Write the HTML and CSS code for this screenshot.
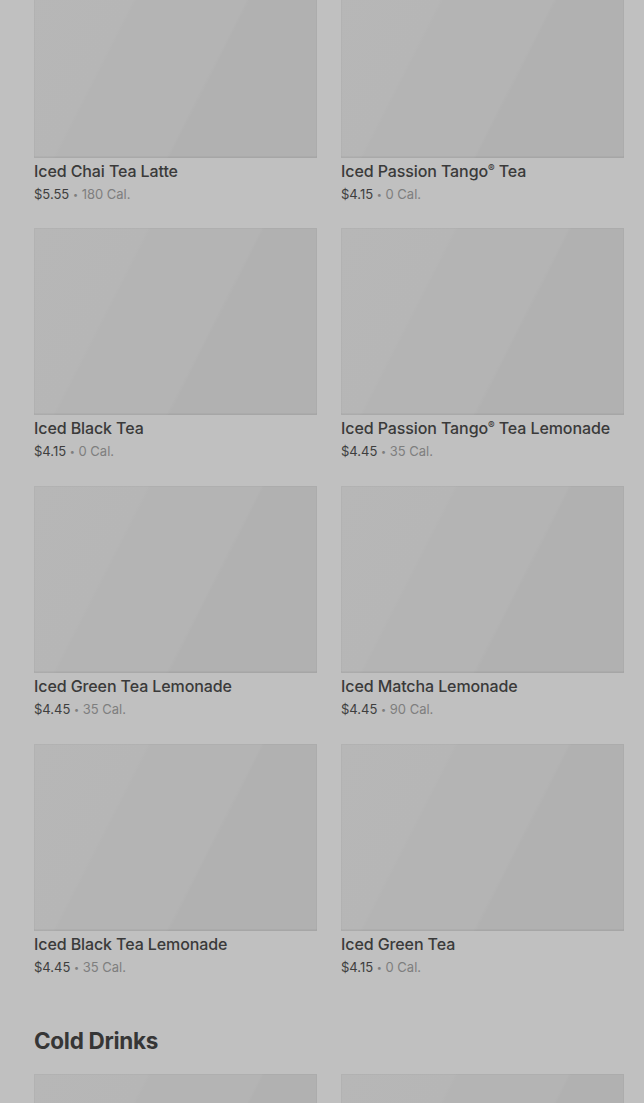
FILE: index.html
```html
<!DOCTYPE html>
<html lang="en">
<head>
<meta charset="utf-8">
<title>Menu</title>
<link rel="stylesheet" href="styles.css">
</head>
<body>
<main class="page">
  <section class="grid grid-first">
    <article class="card"><div class="thumb"></div><div class="info"><h3 class="name">Iced Chai Tea Latte</h3><p class="meta"><span class="price">$5.55</span> <span class="dot">•</span> <span class="cal">180 Cal.</span></p></div></article>
    <article class="card"><div class="thumb"></div><div class="info"><h3 class="name">Iced Passion Tango<sup>®</sup> Tea</h3><p class="meta"><span class="price">$4.15</span> <span class="dot">•</span> <span class="cal">0 Cal.</span></p></div></article>
    <article class="card"><div class="thumb"></div><div class="info"><h3 class="name">Iced Black Tea</h3><p class="meta"><span class="price">$4.15</span> <span class="dot">•</span> <span class="cal">0 Cal.</span></p></div></article>
    <article class="card"><div class="thumb"></div><div class="info"><h3 class="name">Iced Passion Tango<sup>®</sup> Tea Lemonade</h3><p class="meta"><span class="price">$4.45</span> <span class="dot">•</span> <span class="cal">35 Cal.</span></p></div></article>
    <article class="card"><div class="thumb"></div><div class="info"><h3 class="name">Iced Green Tea Lemonade</h3><p class="meta"><span class="price">$4.45</span> <span class="dot">•</span> <span class="cal">35 Cal.</span></p></div></article>
    <article class="card"><div class="thumb"></div><div class="info"><h3 class="name">Iced Matcha Lemonade</h3><p class="meta"><span class="price">$4.45</span> <span class="dot">•</span> <span class="cal">90 Cal.</span></p></div></article>
    <article class="card"><div class="thumb"></div><div class="info"><h3 class="name">Iced Black Tea Lemonade</h3><p class="meta"><span class="price">$4.45</span> <span class="dot">•</span> <span class="cal">35 Cal.</span></p></div></article>
    <article class="card"><div class="thumb"></div><div class="info"><h3 class="name">Iced Green Tea</h3><p class="meta"><span class="price">$4.15</span> <span class="dot">•</span> <span class="cal">0 Cal.</span></p></div></article>
  </section>
  <h2 class="section-title">Cold Drinks</h2>
  <section class="grid">
    <article class="card"><div class="thumb"></div></article>
    <article class="card"><div class="thumb"></div></article>
  </section>
</main>
</body>
</html>
```

FILE: styles.css
```css
html, body {
  margin: 0;
  padding: 0;
  background: #c0c0c0;
  overflow: hidden;
}
body {
  font-family: Inter, "Noto Sans", "Liberation Sans", sans-serif;
  color: #3b3b3b;
  height: 1103px;
}
.page {
  padding: 0 20px 0 34px;
  margin-top: -29px;
}
.grid {
  display: grid;
  grid-template-columns: 283px 283px;
  column-gap: 24px;
  row-gap: 26px;
}
.grid-first {
  row-gap: 25px;
}
.grid-first .card:nth-child(n+5) {
  margin-top: 1px;
}
.thumb {
  height: 187px;
  background: linear-gradient(117deg, #b7b7b7 0%, #b6b6b6 30%, #b4b4b4 31%, #b4b4b4 60%, #b1b1b1 61%, #b1b1b1 100%);
  box-shadow: inset 0 0 0 1px rgba(0,0,0,0.025), inset 0 -2px 0 rgba(0,0,0,0.03);
}
.info {
  padding-top: 3px;
}
.name {
  margin: 0;
  height: 20px;
  font-size: 16px;
  line-height: 20px;
  font-weight: 500;
  color: #3a3a3a;
  white-space: nowrap;
  letter-spacing: -0.1px;
}
.name sup {
  font-size: 10px;
  line-height: 0;
  vertical-align: baseline;
  position: relative;
  top: -5px;
}
.meta {
  margin: 4px 0 0;
  height: 18px;
  font-size: 13px;
  line-height: 18px;
  color: #7e7e7e;
}
.price {
  color: #3e3e3e;
}
.dot {
  font-size: 9px;
  vertical-align: 1px;
  color: #7e7e7e;
}
.section-title {
  margin: 51px 0 19px;
  font-size: 22.5px;
  line-height: 28px;
  font-weight: 700;
  color: #363636;
  letter-spacing: -0.3px;
}
```
